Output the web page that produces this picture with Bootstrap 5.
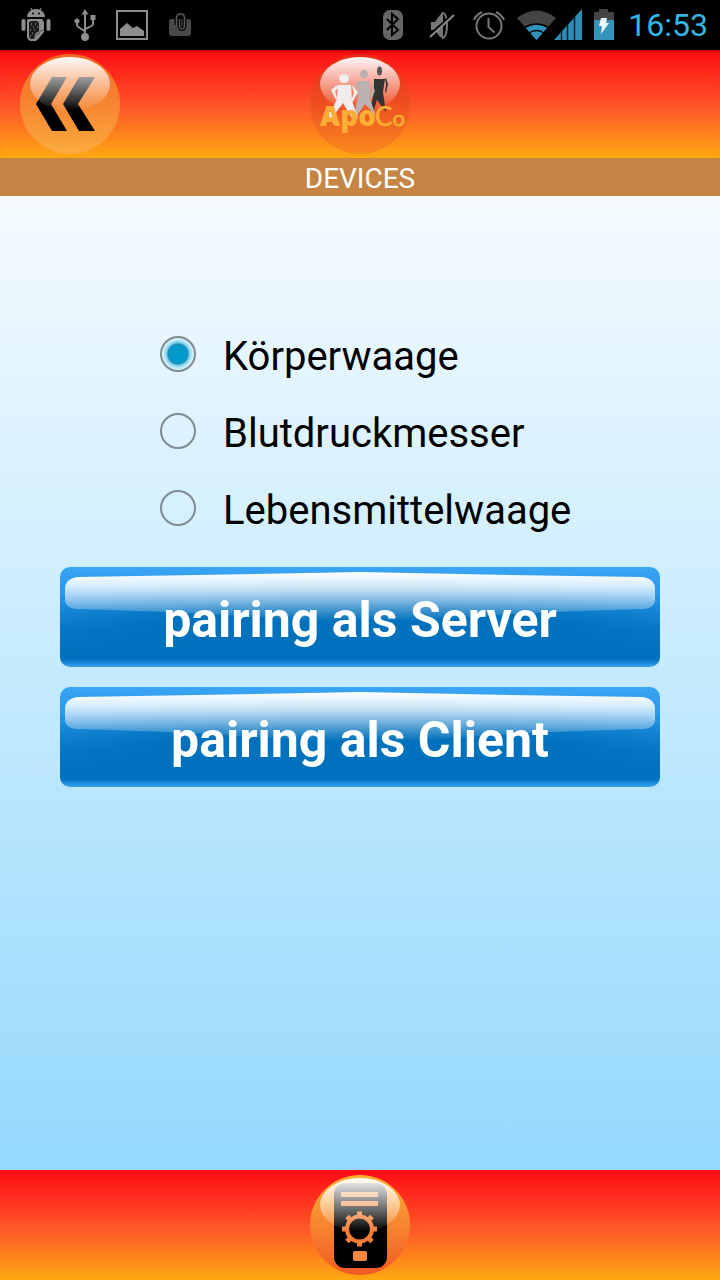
<!DOCTYPE html>
<html lang="de">
<head>
<meta charset="utf-8">
<meta name="viewport" content="width=device-width, initial-scale=1">
<title>Devices</title>
<link href="https://cdn.jsdelivr.net/npm/bootstrap@5.3.0/dist/css/bootstrap.min.css" rel="stylesheet">
<style>
  body { font-family: Roboto, "Liberation Sans", sans-serif; background: #000; }
  svg { display: block; }
  .status-bar { height: 50px; background: #000; padding: 0 12px 0 20px; }
  .clock { color: #33b5e5; font-size: 32px; line-height: 40px; margin-left: 14px; }
  .app-bar { background: linear-gradient(#ff0b14, #ff5a28 55%, #ffa912); }
  .top-bar { height: 108px; padding: 0 20px; box-shadow: inset 0 3px 3px -2px #a00; }
  .bottom-bar { height: 110px; }
  .round-btn { width: 100px; height: 100px; }
  .page-title { background: #c68545; color: #fff; font-size: 28px; line-height: 38px; padding-top: 2px; height: 38px; }
  .screen { background: linear-gradient(#f5fbff, #94d9fd); padding: 119px 60px 0; }
  .choices { padding-left: 100px; margin-bottom: 21px; }
  .choice { height: 77px; gap: 27px; }
  .choice label { font-size: 40px; line-height: 48px; color: #000; padding-top: 6px; }
  .choice .form-check-input {
    width: 36px; height: 36px; margin: 0; flex: none;
    background: transparent; border: 2px solid #7f8a91;
  }
  .choice .form-check-input:checked {
    background: radial-gradient(circle, #0099cc 0 9px, #3a86a6 10px, #62c5e8 11px, #a9e2f7 13px, #e0f5fd 16px);
  }
  .actions { gap: 20px; }
  .glossy {
    height: 100px; border: 0; border-radius: 10px; color: #fff;
    font-size: 50px; line-height: 56px; font-weight: 700; padding: 6px 0 0;
    background:
      linear-gradient(transparent 92%, #3ca3f2),
      radial-gradient(ellipse 56% 64% at 50% 84%, #0071bd 70%, transparent 125%),
      linear-gradient(#3ba5f5, #1e8ee0 45%, #0071bd 85%);
  }
  .glossy:hover { color: #fff; }
  .gloss { position: absolute; inset: 0; width: 100%; height: 100%; }
</style>
</head>
<body>
<div class="d-flex flex-column min-vh-100">

  <div class="status-bar d-flex align-items-center justify-content-between">
    <svg width="180" height="50" viewBox="20 0 180 50" aria-hidden="true">
      <g fill="#8d8d8d" stroke="#8d8d8d">
        <path d="M27 17a9 8 0 0 1 18 0z" stroke="none"/>
        <path d="M31 8l2 4M41 8l-2 4" stroke-width="1.2"/>
        <rect x="21.500" y="19" width="4" height="12" rx="2" stroke="none"/>
        <rect x="46.500" y="19" width="4" height="12" rx="2" stroke="none"/>
        <path d="M27 21q0-2 2-2h13l2 3v10l-5 6-3 3h-5q-3 0-4-4z" stroke="none"/>
      </g>
      <g fill="#000"><circle cx="33" cy="13.500" r="1"/><circle cx="39" cy="13.500" r="1"/><path d="M29 23q0-2 3-2h5l2 2v8l-4 3-1 5h-3q-2-1-2-3z" fill="#1c1c1c"/></g>
      <path d="M31 24h1m3 0h1m-3 3h1m3 0h1m-8 3h1m3 0h1m-3 3h1m-3 3h1" stroke="#aaa" stroke-width="1.200"/>
      <path d="M34 39l2-4 3-1 1-3 4-1" stroke="#555" stroke-width="1" fill="none"/>
      <g fill="none" stroke="#8d8d8d" stroke-width="2">
        <path d="M85 13v24M77 21v4q0 2 8 6M93 18v6q0 2-8 5"/>
      </g>
      <g fill="#8d8d8d"><path d="M85 9l3.500 5.500h-7z"/><circle cx="77" cy="21" r="2.500"/><rect x="90.500" y="15" width="5" height="5"/><circle cx="85" cy="37" r="4"/></g>
      <rect x="117" y="11" width="30" height="28" fill="none" stroke="#8d8d8d" stroke-width="2"/>
      <path d="M120 36v-7l7-6 6 5 4-2 7 5v5z" fill="#8d8d8d"/>
      <rect x="169" y="19" width="22" height="17" rx="3" fill="#484a48"/>
      <path d="M176.500 25v-7q0-4 4-4t4 4v7q0 4-2.500 4t-2.500-4v-6" fill="none" stroke="#0a0a0a" stroke-width="4"/>
      <path d="M176.500 25v-7q0-4 4-4t4 4v7q0 4-2.500 4t-2.500-4v-6" fill="none" stroke="#5a5a5a" stroke-width="1.300"/>
    </svg>
    <div class="d-flex align-items-center">
      <svg width="234" height="50" viewBox="380 0 234 50" aria-hidden="true">
        <rect x="383" y="10" width="20" height="30" rx="7" fill="#656765"/>
        <path d="M387 19l11 11-6 5V14l6 5-11 11" fill="none" stroke="#000" stroke-width="2"/>
        <path d="M431 22h4l5-7h3v22h-3l-5-7h-4z" fill="#777"/>
        <path d="M443 13q4 1 4 12t-4 13q-3-2-3-13t3-12z" fill="none" stroke="#777" stroke-width="2"/>
        <path d="M430 35l24-21" stroke="#000" stroke-width="3"/><path d="M430 37l24-22" stroke="#8a8a8a" stroke-width="2"/>
        <g fill="none" stroke="#777" stroke-width="2"><circle cx="489" cy="26" r="12.500"/><path d="M488.500 18v9l6 5.500M474 20q2-5 8-8M496 12q6 3 8 8"/></g>
        <path d="M517 18q19.500-15 39 0L536.500 40z" fill="#444"/>
        <path d="M526 28q10.500-7 21 0L536.500 40z" fill="#2d93bd"/>
        <path d="M525 27q11.500-6 23 0M529 33q7.500-5 15 0" fill="none" stroke="#000" stroke-width="1.500"/>
        <path d="M554 40l28-31v31z" fill="#2d8db5"/>
        <path d="M561.500 30v10M567.500 23v17M574.500 15v25" stroke="#06202b" stroke-width="1.500"/>
        <path d="M594 12h5V9h9v3h6v10h-20z" fill="#444"/>
        <rect x="594" y="20" width="20" height="20" fill="#3593b9"/>
        <path d="M601 18h6l-1 5h3l-8 11 1-8h-3z" fill="#eef7fb"/>
      </svg>
      <span class="clock">16:53</span>
    </div>
  </div>

  <header class="app-bar top-bar row g-0 align-items-center">
    <div class="col">
      <button type="button" class="btn p-0 border-0 round-btn" aria-label="Zurück">
        <svg width="100" height="100" viewBox="0 0 100 100">
          <defs>
            <linearGradient id="shine" x1="0" y1="0" x2="0" y2="1"><stop offset="0" stop-color="#fff" stop-opacity=".97"/><stop offset=".5" stop-color="#fff" stop-opacity=".5"/><stop offset="1" stop-color="#fff" stop-opacity="0"/></linearGradient>
            <linearGradient id="orangeUp" x1="0" y1="0" x2="0" y2="1"><stop offset="0" stop-color="#f06a22"/><stop offset=".5" stop-color="#f68532"/><stop offset="1" stop-color="#fcab3d"/></linearGradient>
          </defs>
          <circle cx="50" cy="50" r="50" fill="url(#orangeUp)"/>
          <path d="M32 23h15L31 50l16 27H32L16 50zM59 23h16L58 50l17 27H59L43 50z" fill="#000"/>
          <ellipse cx="50" cy="30" rx="40" ry="27" fill="url(#shine)"/>
        </svg>
      </button>
    </div>
    <div class="col-auto">
      <svg width="100" height="100" viewBox="0 0 100 100" role="img" aria-label="ApoCo">
        <defs><linearGradient id="orangeDim" x1="0" y1="0" x2="0" y2="1"><stop offset="0" stop-color="#ea2a18"/><stop offset=".5" stop-color="#ee4f22"/><stop offset="1" stop-color="#f98a1c"/></linearGradient></defs>
        <circle cx="50" cy="50" r="50" fill="url(#orangeDim)"/>
        <ellipse cx="50" cy="30" rx="40" ry="27" fill="url(#shine)"/>
        <g fill="#333"><ellipse cx="69.500" cy="17" rx="2.500" ry="4.500" fill="#555"/><path d="M64 25h11l-2 13 3 20-9-12-4 13-3-2 4-19zM76 24l2 6-2 9-1-1 1-8-1-5z"/></g>
        <g fill="#b9b2b0"><ellipse cx="54" cy="20" rx="4" ry="4.500"/><path d="M47 27h13v18l6 17-11-12-9 13-1-6 3-14zM46 27l-3 8 3 7 1-1-1-6zM61 27l4 10-4 8-1-2 2-6z"/></g>
        <g fill="#f0eded"><ellipse cx="34" cy="24.500" rx="5" ry="4.500"/><path d="M28 31h13l1 16 6 17-7-1-8-14-9 12-6 3 9-19zM27 31l-6 5 5 10 1-2-2-7 3-3zM42 31l6 7-6 11-1-2 3-8z"/><path d="M18 58l7-1-1 14z"/></g>
        <g fill="#fbad35"><text x="10" y="72" font-family="Open Sans, sans-serif" font-size="28" font-weight="800">Apo</text><text x="65" y="72" font-family="Lato, sans-serif" font-size="26" stroke="#fbad35" stroke-width=".6">C<tspan font-size="22">o</tspan></text></g>
      </svg>
    </div>
    <div class="col"></div>
  </header>

  <h1 class="page-title text-center fw-normal m-0">DEVICES</h1>

  <main class="screen flex-grow-1">
    <form>
      <div class="choices">
        <div class="choice d-flex align-items-center"><input class="form-check-input" type="radio" name="device" id="scale" checked><label for="scale">Körperwaage</label></div>
        <div class="choice d-flex align-items-center"><input class="form-check-input" type="radio" name="device" id="pressure"><label for="pressure">Blutdruckmesser</label></div>
        <div class="choice d-flex align-items-center"><input class="form-check-input" type="radio" name="device" id="food"><label for="food">Lebensmittelwaage</label></div>
      </div>
      <svg width="0" height="0" class="position-absolute" aria-hidden="true"><defs>
        <linearGradient id="glass" x1="0" y1="0" x2="0" y2="1"><stop offset="0" stop-color="#fff"/><stop offset=".3" stop-color="#fff" stop-opacity=".8"/><stop offset="1" stop-color="#fff" stop-opacity="0"/></linearGradient>
        <symbol id="highlight" viewBox="0 0 600 100" preserveAspectRatio="none"><path d="M17 10Q160 8 300 5Q440 8 583 10Q595 12 595 22V32Q595 41 583 42Q470 45 410 50Q300 58 190 50Q130 45 17 42Q5 41 5 32V22Q5 12 17 10z" fill="url(#glass)"/></symbol>
      </defs></svg>
      <div class="actions d-grid">
        <button type="button" class="btn glossy position-relative"><svg class="gloss" aria-hidden="true"><use href="#highlight"/></svg><span class="position-relative">pairing als Server</span></button>
        <button type="button" class="btn glossy position-relative"><svg class="gloss" aria-hidden="true"><use href="#highlight"/></svg><span class="position-relative">pairing als Client</span></button>
      </div>
    </form>
  </main>

  <footer class="app-bar bottom-bar d-flex align-items-center justify-content-center">
    <button type="button" class="btn p-0 border-0 round-btn" aria-label="Geräte">
      <svg width="100" height="100" viewBox="0 0 100 100">
        <defs><linearGradient id="orangeDown" x1="0" y1="0" x2="0" y2="1"><stop offset="0" stop-color="#fbb034"/><stop offset=".5" stop-color="#f6852f"/><stop offset="1" stop-color="#f15a24"/></linearGradient></defs>
        <circle cx="50" cy="50" r="50" fill="url(#orangeDown)"/>
        <rect x="24" y="8" width="53" height="85" rx="11" fill="#000"/>
        <g fill="#f7853a"><rect x="31" y="17" width="37" height="5"/><rect x="31" y="26" width="37" height="5"/><rect x="43" y="76" width="14" height="10" rx="2"/></g>
        <circle cx="49.500" cy="54" r="12.500" fill="none" stroke="#f47d35" stroke-width="4"/>
        <g stroke="#f47d35" stroke-width="5"><path d="M49.500 36.500v5M49.500 66.500v5M32 54h5M62 54h5M37 41.500l3.500 3.500M58.500 63l3.500 3.500M62 41.500l-3.500 3.500M40.500 63l-3.500 3.500"/></g>
        <ellipse cx="50" cy="30" rx="40" ry="27" fill="url(#shine)"/>
      </svg>
    </button>
  </footer>
</div>
<script src="https://cdn.jsdelivr.net/npm/bootstrap@5.3.0/dist/js/bootstrap.bundle.min.js"></script>
</body>
</html>
